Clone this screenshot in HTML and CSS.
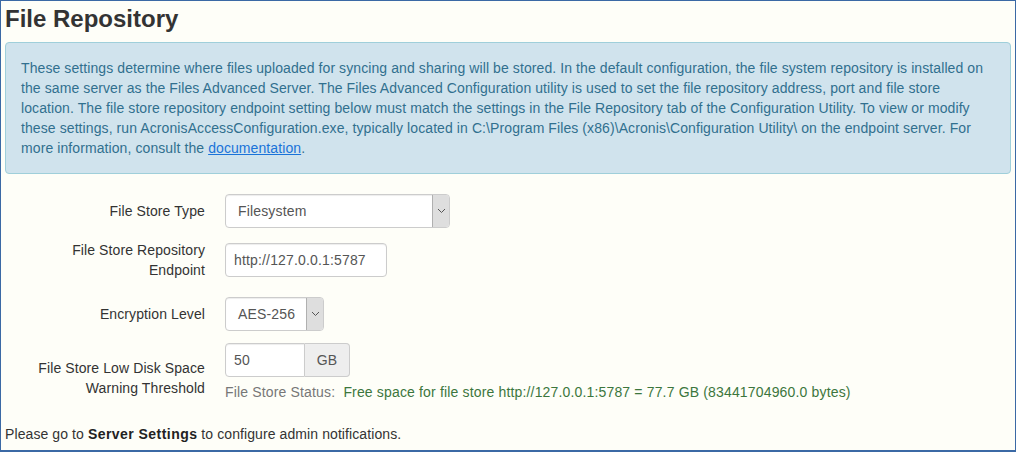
FILE: index.html
```html
<!DOCTYPE html>
<html>
<head>
<meta charset="utf-8">
<link rel="stylesheet" href="styles.css">
</head>
<body>
<div class="frame">
  <h2 class="title">File Repository</h2>
  <div class="alert">These settings determine where files uploaded for syncing and sharing will be stored. In the default configuration, the file system repository is installed on<br>the same server as the Files Advanced Server. The Files Advanced Configuration utility is used to set the file repository address, port and file store<br>location. The file store repository endpoint setting below must match the settings in the File Repository tab of the Configuration Utility. To view or modify<br>these settings, run AcronisAccessConfiguration.exe, typically located in C:\Program Files (x86)\Acronis\Configuration Utility\ on the endpoint server. For<br>more information, consult the <a class="link" href="#">documentation</a>.</div>

  <div class="form">
    <div class="row row-1">
      <div class="label">File Store Type</div>
      <div class="control">
        <div class="select select-type">
          <span class="select-value">Filesystem</span>
          <span class="select-arrow"><svg width="9" height="6" viewBox="0 0 9 6"><polyline points="1,1 4.5,4.5 8,1" fill="none" stroke="#555" stroke-width="1"/></svg></span>
        </div>
      </div>
    </div>
    <div class="row row-2">
      <div class="label">File Store Repository<br>Endpoint</div>
      <div class="control">
        <div class="input input-endpoint">http://127.0.0.1:5787</div>
      </div>
    </div>
    <div class="row row-3">
      <div class="label">Encryption Level</div>
      <div class="control">
        <div class="select select-enc">
          <span class="select-value">AES-256</span>
          <span class="select-arrow"><svg width="9" height="6" viewBox="0 0 9 6"><polyline points="1,1 4.5,4.5 8,1" fill="none" stroke="#555" stroke-width="1"/></svg></span>
        </div>
      </div>
    </div>
    <div class="row row-4">
      <div class="label">File Store Low Disk Space<br>Warning Threshold</div>
      <div class="control control-4">
        <div class="input-group">
          <div class="input input-size">50</div>
          <div class="addon">GB</div>
        </div>
        <div class="help"><span class="help-label">File Store Status:</span>&nbsp; <span class="help-ok">Free space for file store http://127.0.0.1:5787 = 77.7 GB (83441704960.0 bytes)</span></div>
      </div>
    </div>
  </div>

  <p class="note">Please go to <b>Server Settings</b> to configure admin notifications.</p>
</div>
</body>
</html>
```

FILE: styles.css
```css
html, body {
  margin: 0;
  padding: 0;
}
body {
  font-family: "Liberation Sans", Arial, sans-serif;
  font-size: 14px;
  line-height: 20px;
  letter-spacing: 0.09px;
  color: #333;
  background: #fefef8;
}
.frame {
  box-sizing: border-box;
  width: 1016px;
  height: 452px;
  border-style: solid;
  border-color: #3b69a5;
  border-width: 1px 1px 2px 1px;
  padding: 0 4px;
  background: #fefef8;
  overflow: hidden;
}
.title {
  margin: 5px 0 10px;
  font-size: 24px;
  line-height: 26px;
  font-weight: bold;
  letter-spacing: 0;
  color: #333;
}
.alert {
  border: 1px solid #9fcfda;
  border-radius: 4px;
  background: #d0e3ed;
  color: #31708f;
  padding: 15px;
  white-space: nowrap;
}
.link {
  color: #1a73d9;
  text-decoration: underline;
}
.form {
  margin-top: 20px;
}
.row {
  display: flex;
  align-items: center;
}
.row-1 { height: 34px; margin-bottom: 15px; }
.row-2 { height: 34px; margin-bottom: 20px; }
.row-3 { height: 34px; margin-bottom: 12px; }
.row-4 { margin-bottom: 12px; }
.label {
  width: 200px;
  flex: none;
  text-align: right;
  color: #333;
  letter-spacing: 0.1px;
}
.control {
  margin-left: 20px;
}
.control-4 {
  padding-bottom: 10px;
}
.select {
  box-sizing: border-box;
  display: flex;
  height: 34px;
  border: 1px solid #ccc;
  border-radius: 4px;
  background: #fff;
  box-shadow: inset 0 1px 1px rgba(0,0,0,.075);
  overflow: hidden;
}
.select-type { width: 225px; }
.select-enc { width: 99px; }
.select-value {
  flex: 1;
  padding-left: 12px;
  line-height: 32px;
  color: #555;
  letter-spacing: 0.16px;
}
.select-arrow {
  box-sizing: border-box;
  width: 17px;
  flex: none;
  background: #dedede;
  border-left: 1px solid #b0b0b0;
  display: flex;
  align-items: center;
  justify-content: center;
}
.input {
  box-sizing: border-box;
  height: 34px;
  border: 1px solid #ccc;
  border-radius: 4px;
  background: #fff;
  padding-left: 8px;
  line-height: 32px;
  color: #555;
  letter-spacing: 0.16px;
  box-shadow: inset 0 1px 1px rgba(0,0,0,.075);
}
.input-endpoint { width: 162px; }
.input-group {
  display: flex;
}
.input-size {
  width: 80px;
  border-radius: 4px 0 0 4px;
}
.addon {
  box-sizing: border-box;
  width: 45px;
  height: 34px;
  border: 1px solid #ccc;
  border-left: 0;
  border-radius: 0 4px 4px 0;
  background: #eee;
  color: #555;
  text-align: center;
  line-height: 32px;
}
.help {
  margin-top: 5px;
  white-space: nowrap;
  letter-spacing: 0.16px;
}
.help-label {
  color: #777;
}
.help-ok {
  color: #3c763d;
}
.note {
  margin: 0;
  color: #333;
}
.note b {
  color: #222;
  letter-spacing: 0.45px;
}
```
